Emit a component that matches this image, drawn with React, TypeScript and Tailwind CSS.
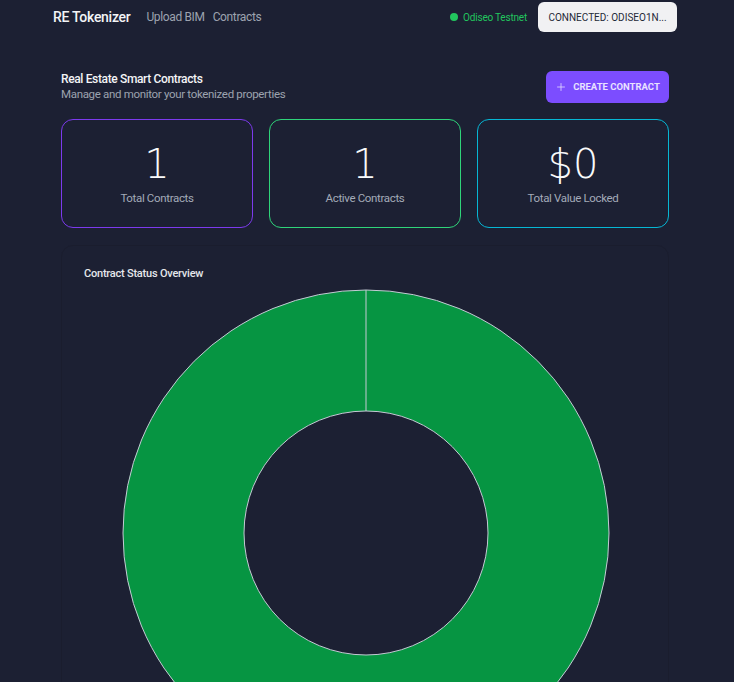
import { Plus } from 'lucide-react';

const stats = [
  { value: '1', label: 'Total Contracts', border: 'border-[#7c3aed]' },
  { value: '1', label: 'Active Contracts', border: 'border-[#2fd47a]' },
  { value: '$0', label: 'Total Value Locked', border: 'border-[#06b6d4]' },
];

function StatusDonut() {
  const cx = 304;
  const cy = 250;
  return (
    <svg width="608" height="520" viewBox="0 0 608 520" className="block">
      <circle cx={cx} cy={cy} r={243} fill="#069542" stroke="#c4cad4" strokeWidth={1} />
      <circle cx={cx} cy={cy} r={122} fill="#1c2033" stroke="#c4cad4" strokeWidth={1} />
      <line x1={cx} y1={cy - 243} x2={cx} y2={cy - 122} stroke="#c4cad4" strokeWidth={1} />
    </svg>
  );
}

export default function App() {
  return (
    <div
      className="min-h-screen bg-[#1c2033] text-white overflow-hidden"
      style={{ fontFamily: 'Roboto, "Liberation Sans", sans-serif' }}
    >
      <nav className="flex items-center justify-between h-[34px] pl-[53px] pr-[57px]">
        <div className="flex items-center">
          <span className="text-[14px] font-medium text-[#f3f4f6] tracking-[-0.02em]">RE Tokenizer</span>
          <a className="ml-[16px] text-[12px] text-[#9ca3af] tracking-[-0.03em]">Upload BIM</a>
          <a className="ml-[8px] text-[12px] text-[#9ca3af] tracking-[-0.03em]">Contracts</a>
        </div>
        <div className="flex items-center">
          <span className="w-2 h-2 rounded-full bg-[#22c55e]" />
          <span className="ml-[5px] text-[10px] text-[#22c55e] tracking-[-0.02em]">Odiseo Testnet</span>
          <button className="ml-[11px] h-[30px] w-[139px] rounded-md bg-[#f1f1f3] text-[10px] text-[#1f2937]">
            CONNECTED: ODISEO1N...
          </button>
        </div>
      </nav>

      <main className="ml-[61px] w-[608px]">
        <div className="flex items-center justify-between mt-[37px]">
          <div className="tracking-[-0.02em]">
            <h1 className="text-[12px] font-medium text-[#f3f4f6] leading-[15px] tracking-[-0.03em]">
              Real Estate Smart Contracts
            </h1>
            <p className="text-[11.5px] text-[#9ca3af] leading-[15px]">Manage and monitor your tokenized properties</p>
          </div>
          <button className="flex items-center gap-[6px] h-[32px] w-[123px] justify-center rounded-md bg-[#7c4dff] text-[9.5px] font-bold text-[#e9e2ff]">
            <Plus className="w-3 h-3" strokeWidth={1.5} />
            CREATE CONTRACT
          </button>
        </div>

        <div className="grid grid-cols-3 gap-4 mt-[16px]">
          {stats.map((s) => (
            <div
              key={s.label}
              className={`h-[109px] rounded-xl border ${s.border} flex flex-col items-center pt-[24px]`}
            >
              <div
                className="text-[40px] font-extralight leading-none text-[#f9fafb]"
                style={{ fontFamily: '"DejaVu Sans", sans-serif' }}
              >
                {s.value}
              </div>
              <div className="mt-[6px] text-[11.5px] text-[#a3aab8] tracking-[-0.03em]">{s.label}</div>
            </div>
          ))}
        </div>

        <section className="mt-[17px] rounded-xl border border-[#1a1d2e]">
          <h2 className="ml-[22px] mt-[20px] text-[11px] font-medium text-[#e5e7eb] tracking-[-0.02em]">
            Contract Status Overview
          </h2>
          <StatusDonut />
        </section>
      </main>
    </div>
  );
}
